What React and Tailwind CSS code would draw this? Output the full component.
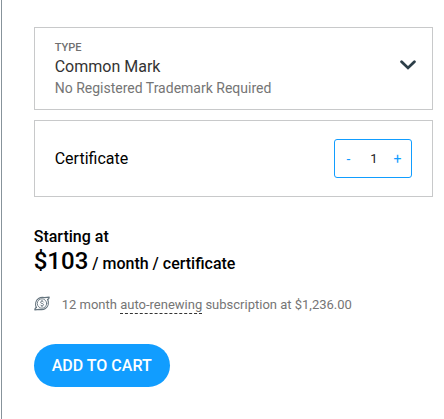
import React, { useState } from 'react';

const RenewIcon = () => (
  <svg className="mt-[-3px]" width="16" height="15" viewBox="0 0 16 15" fill="none" stroke="#66757f" strokeLinecap="round" strokeLinejoin="round">
    <path d="M2.2 11.3C.9 8.1 1.8 4.4 4.6 2.5 6.4 1.3 8.6 1.3 10.4 1.6L15.2 1.2C15.2 2.3 14.6 3.1 13.5 3.6" strokeWidth="1.2" />
    <path d="M13.8 3.7C15.1 6.9 14.2 10.6 11.4 12.5 9.6 13.7 7.4 13.7 5.6 13.4L.8 13.8C.8 12.7 1.4 11.9 2.5 11.4" strokeWidth="1.2" />
    <circle cx="8" cy="7.5" r="4.7" strokeWidth="0.9" />
    <path d="M9.5 6C9.1 5.4 8.6 5.2 8 5.2 7.1 5.2 6.5 5.7 6.5 6.3 6.5 7.8 9.6 7.1 9.6 8.7 9.6 9.4 8.9 9.8 8 9.8 7.3 9.8 6.7 9.5 6.4 9M8 4.5V5.2M8 9.8V10.5" strokeWidth="0.9" />
  </svg>
);

const TypeSelect = ({ label, name, description }) => (
  <button
    type="button"
    className="flex h-[83px] w-full items-center justify-between border border-[#c8c9ca] pr-4 pl-[19.7px] text-left"
  >
    <span className="flex flex-col pt-0.5">
      <span className="text-[11px] leading-4 font-medium text-[#707070]">{label}</span>
      <span className="text-base leading-[22px] text-[#333]">{name}</span>
      <span className="text-sm leading-[21px] text-[#757575]">{description}</span>
    </span>
    <svg className="mt-[-7px]" width="16" height="10" viewBox="0 0 16 10" fill="none" stroke="#2c3e48" strokeWidth="2.8" strokeLinecap="round">
      <path d="M1.6 1.7L8 7.9L14.4 1.7" />
    </svg>
  </button>
);

const QuantityStepper = ({ value, onChange }) => (
  <div className="flex h-[39px] w-[78px] items-center rounded-[3px] border border-[#119dff] text-sm">
    <button type="button" className="w-[27px] text-[#119dff]" onClick={() => onChange(Math.max(1, value - 1))}>
      -
    </button>
    <span className="w-6 pt-0.5 text-center text-[13px] text-[#222]">{value}</span>
    <button type="button" className="w-[23px] text-[#119dff]" onClick={() => onChange(value + 1)}>
      +
    </button>
  </div>
);

const App = () => {
  const [quantity, setQuantity] = useState(1);

  return (
    <div className="ml-px h-[419px] border-l border-[#87939b] bg-white pt-[27px] pr-[11px] pl-8 font-[Roboto,sans-serif] text-black">
      <TypeSelect label="TYPE" name="Common Mark" description="No Registered Trademark Required" />

      <div className="mt-2.5 flex h-[77px] items-center justify-between border border-[#c8c9ca] pr-5 pl-[19.7px]">
        <span className="text-base">Certificate</span>
        <QuantityStepper value={quantity} onChange={setQuantity} />
      </div>

      <div className="-ml-[0.3px] mt-7 font-medium">
        <div className="text-base leading-6">Starting at</div>
        <div className="text-base leading-6">
          <span className="text-2xl leading-6">$103</span> / month / certificate
        </div>
      </div>

      <div className="mt-[19px] flex items-center gap-[11.7px] text-[13px] leading-5 text-[#757575]">
        <RenewIcon />
        <p>
          12 month <span className="border-b border-dashed border-[#333] pb-px">auto-renewing</span> subscription at $1,236.00
        </p>
      </div>

      <button type="button" className="mt-[29px] h-[43px] w-[136px] rounded-full bg-[#119dff] pr-[0.6px] text-base font-medium text-white">
        ADD TO CART
      </button>
    </div>
  );
};

export default App;
